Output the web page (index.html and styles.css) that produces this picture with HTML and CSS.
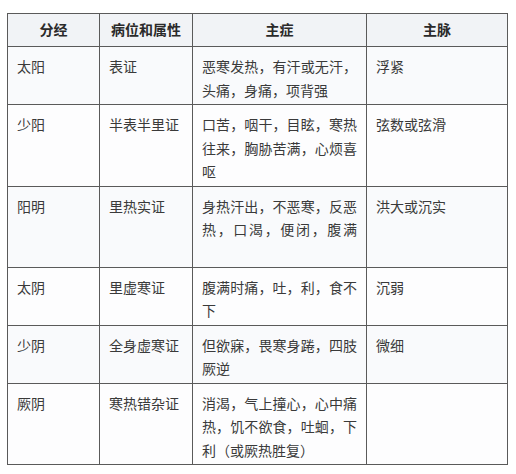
FILE: index.html
```html
<!DOCTYPE html>
<html lang="zh">
<head>
<meta charset="utf-8">
<title>六经辨证</title>
<link rel="stylesheet" href="styles.css">
</head>
<body>
<table class="tbl">
  <colgroup>
    <col class="c1"><col class="c2"><col class="c3"><col class="c4">
  </colgroup>
  <thead>
    <tr class="head"><th>分经</th><th>病位和属性</th><th>主症</th><th>主脉</th></tr>
  </thead>
  <tbody>
    <tr class="odd"><td>太阳</td><td>表证</td><td class="sym">恶寒发热，有汗或无汗，头痛，身痛，项背强</td><td>浮紧</td></tr>
    <tr class="even"><td>少阳</td><td>半表半里证</td><td class="sym">口苦，咽干，目眩，寒热往来，胸胁苦满，心烦喜呕</td><td>弦数或弦滑</td></tr>
    <tr class="odd"><td>阳明</td><td>里热实证</td><td class="sym full">身热汗出，不恶寒，反恶热，口渴，便闭，腹满</td><td>洪大或沉实</td></tr>
    <tr class="even"><td>太阴</td><td>里虚寒证</td><td class="sym">腹满时痛，吐，利，食不下</td><td>沉弱</td></tr>
    <tr class="odd"><td>少阴</td><td>全身虚寒证</td><td class="sym">但欲寐，畏寒身踡，四肢厥逆</td><td>微细</td></tr>
    <tr class="even"><td>厥阴</td><td>寒热错杂证</td><td class="sym">消渴，气上撞心，心中痛热，饥不欲食，吐蛔，下利（或厥热胜复）</td><td></td></tr>
  </tbody>
</table>
</body>
</html>
```
FILE: styles.css
```css
html, body {
  margin: 0;
  padding: 0;
  background: #ffffff;
}
body {
  padding: 13px 0 0 7px;
  font-family: "Noto Sans CJK SC", "Noto Sans", sans-serif;
  font-size: 14px;
  color: #3a3a3a;
}
.tbl {
  border-collapse: collapse;
  table-layout: fixed;
  width: 500px;
}
.c1 { width: 92px; }
.c2 { width: 93px; }
.c3 { width: 174px; }
.c4 { width: 141px; }
.tbl th, .tbl td {
  border: 1px solid #5a5a5a;
  line-height: 23.5px;
}
.tbl th {
  background: #f1f3f6;
  font-weight: bold;
  color: #2a2a2a;
  text-align: center;
  padding: 4px 9px 4px;
  height: 24px;
}
.tbl td {
  vertical-align: top;
  text-align: left;
  padding: 8px 9px 2px;
}
.tbl td.sym {
  text-align: justify;
}
.tbl td.full {
  text-align-last: justify;
  padding-bottom: 25px;
}
.odd td { background: #f9fafc; }
.even td { background: #fdfdfe; }
```
